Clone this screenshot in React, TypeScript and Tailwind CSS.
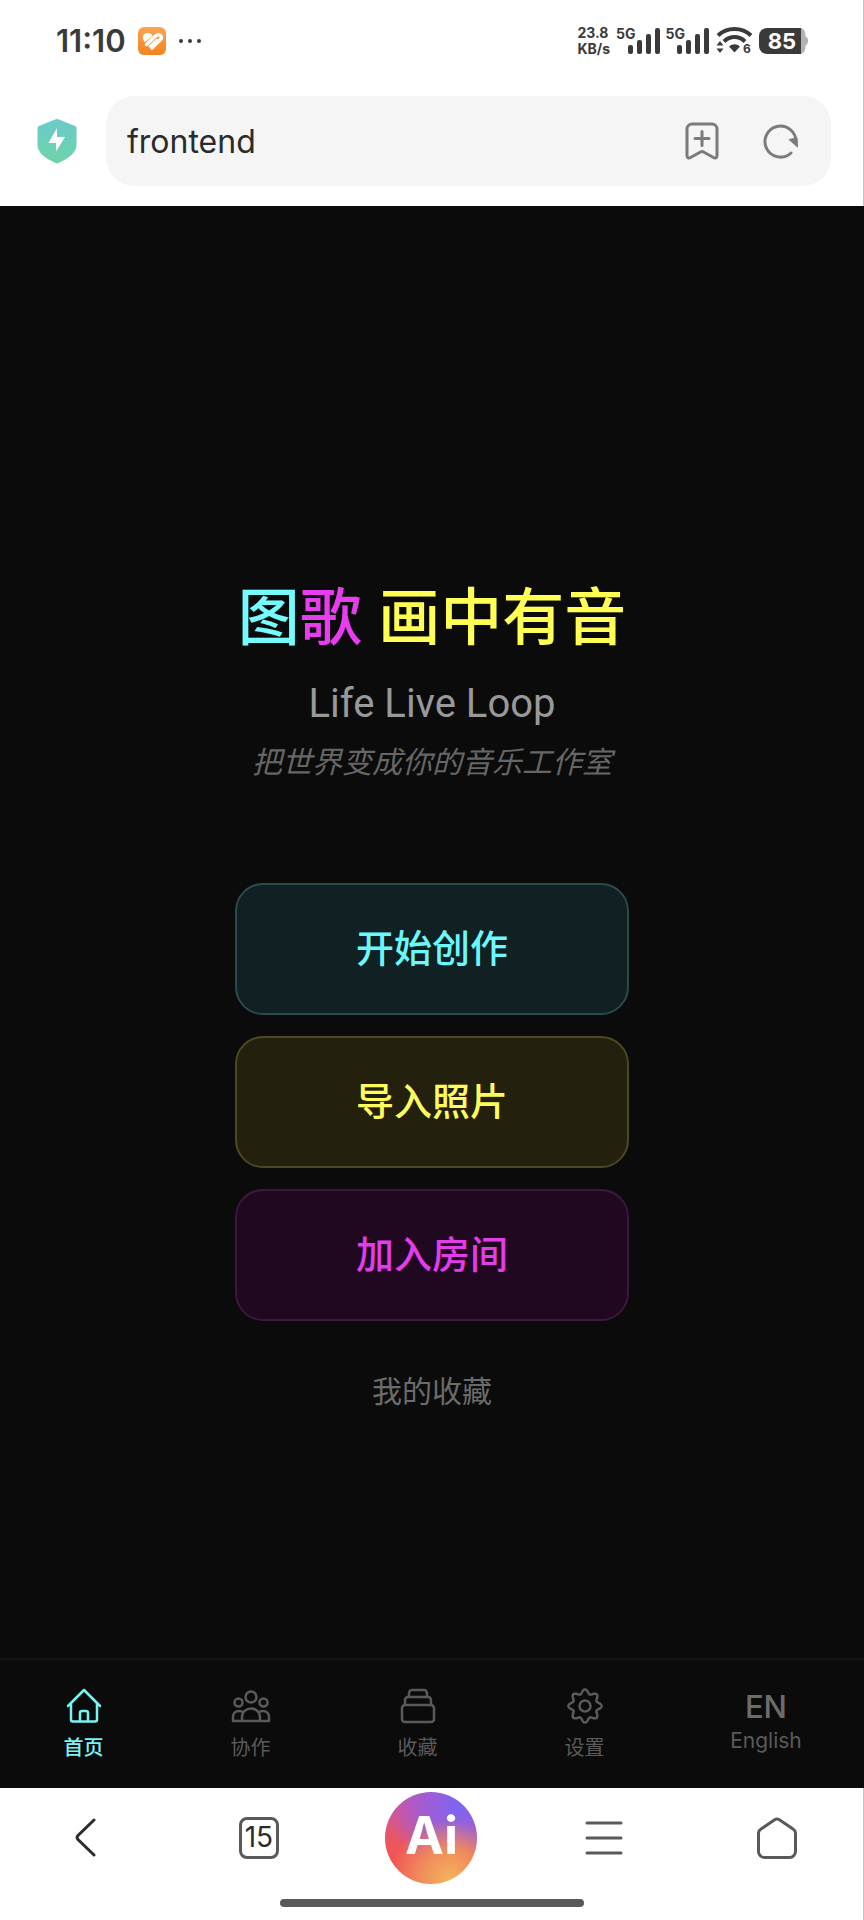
import type { ReactNode } from "react";

interface TabItem {
  id: string;
  label: string;
  icon: ReactNode;
  active?: boolean;
}

interface Action {
  label: string;
  className: string;
}

const actions: Action[] = [
  { label: "开始创作", className: "border-[#2b4a4b] bg-[#102023] text-[#6bf8fb]" },
  { label: "导入照片", className: "border-[#4b4924] bg-[#23200e] text-[#fdfc5c]" },
  { label: "加入房间", className: "border-[#3b183d] bg-[#200920] text-[#e23ceb]" },
];

// eight rounded teeth around the centre of a 36px box
function gearPath() {
  const points: string[] = [];
  for (let deg = 0; deg < 360; deg += 3) {
    const t = (deg * Math.PI) / 180;
    const wave = Math.cos(8 * t);
    const r = 14.5 + 2.1 * wave;
    points.push(`${(18 + r * Math.sin(t)).toFixed(2)} ${(18 - r * Math.cos(t)).toFixed(2)}`);
  }
  return `M${points.join("L")}Z`;
}

function TabIcon({ children }: { children: ReactNode }) {
  return (
    <svg
      viewBox="0 0 36 36"
      className="size-9"
      fill="none"
      stroke="currentColor"
      strokeWidth="2.5"
      strokeLinecap="round"
      strokeLinejoin="round"
      aria-hidden="true"
    >
      {children}
    </svg>
  );
}

const tabs: TabItem[] = [
  {
    id: "home",
    label: "首页",
    active: true,
    icon: (
      <TabIcon>
        <path d="M2 18 18 2l16 16" />
        <path d="M5 16v15.500a2 2 0 0 0 2 2h22a2 2 0 0 0 2-2V16" />
        <path d="M14 33V25a2 2 0 0 1 2-2h4a2 2 0 0 1 2 2v8" />
      </TabIcon>
    ),
  },
  {
    id: "collab",
    label: "协作",
    icon: (
      <svg
        viewBox="0 0 40 36"
        className="h-9 w-10"
        fill="none"
        stroke="currentColor"
        strokeWidth="2.5"
        strokeLinejoin="round"
        aria-hidden="true"
      >
        <circle cx="20" cy="9" r="5.500" />
        <circle cx="7.500" cy="14.500" r="4" />
        <circle cx="32.500" cy="14.500" r="4" />
        <path d="M11 33v-4c0-5 4-8.500 9-8.500s9 3.500 9 8.500v4Z" />
        <path d="M11 33H2v-4c0-3.500 2.500-6 6-6 1.800 0 3.300.5 4.500 1.600M29 33h9v-4c0-3.500-2.500-6-6-6-1.800 0-3.300.5-4.500 1.600" />
      </svg>
    ),
  },
  {
    id: "favorites",
    label: "收藏",
    icon: (
      <TabIcon>
        <path d="M9 9V5a3 3 0 0 1 3-3h12a3 3 0 0 1 3 3v4" />
        <path d="M5 17v-5a3 3 0 0 1 3-3h20a3 3 0 0 1 3 3v5" />
        <rect x="2" y="17" width="32" height="17" rx="3" />
      </TabIcon>
    ),
  },
  {
    id: "settings",
    label: "设置",
    icon: (
      <TabIcon>
        <path d={gearPath()} />
        <circle cx="18" cy="18" r="5.500" />
      </TabIcon>
    ),
  },
];

function Signal() {
  return (
    <div className="flex h-8 items-start">
      <span className="-mr-2 shrink-0 text-[14px] leading-[17px] font-bold">5G</span>
      <svg viewBox="0 0 32 32" className="size-8" fill="currentColor" aria-hidden="true">
        <rect x="0" y="20" width="5" height="9" rx="2" />
        <rect x="9" y="15" width="5" height="14" rx="2" />
        <rect x="18" y="9" width="5" height="20" rx="2" />
        <rect x="27" y="3" width="5" height="26" rx="2" />
      </svg>
    </div>
  );
}

function StatusBar() {
  return (
    <div className="flex h-[82px] items-center justify-between pr-[54px] pl-14 text-[#3a3a3a]">
      <div className="flex items-center gap-3">
        <span className="text-[31px] leading-9 font-semibold">11:10</span>
        <svg viewBox="0 0 28 28" className="size-7" aria-hidden="true">
          <defs>
            <linearGradient id="health" x1="0" y1="0" x2="0" y2="1">
              <stop offset="0" stopColor="#f9a552" />
              <stop offset="1" stopColor="#f58220" />
            </linearGradient>
          </defs>
          <rect width="28" height="28" rx="6" fill="url(#health)" />
          <g fill="none" stroke="#fff" strokeLinecap="round" strokeLinejoin="round">
            <path d="M6 11c0-4 4.500-5 7-2.500L7 13.500Z" fill="#fff" strokeWidth="2.500" />
            <path d="m8.500 17.500 9-8.500c3.500-3 7.500 0 5 3.500L14 21" strokeWidth="3.500" />
            <path d="m11.500 19.500 7.500-7" strokeWidth="2" />
          </g>
        </svg>
        <svg viewBox="0 0 24 6" className="h-[6px] w-6" fill="currentColor" aria-hidden="true">
          <circle cx="3" cy="3" r="2" />
          <circle cx="12" cy="3" r="2" />
          <circle cx="21" cy="3" r="2" />
        </svg>
      </div>
      <div className="flex items-center gap-[6px]">
        <div className="flex flex-col text-[14px] leading-4 font-bold">
          <span>23.8</span>
          <span>KB/s</span>
        </div>
        <Signal />
        <Signal />
        <svg viewBox="0 -2 38 34" className="h-[34px] w-[38px]" aria-hidden="true">
          <g fill="none" stroke="currentColor" strokeWidth="4">
            <path d="M3 9.500C12 .8 27 .8 36 9.500" />
            <path d="M9 15.500c6-6 15-6 21 0" />
          </g>
          <path d="M14 20.500c3.500-3 7.500-3 11 0l-5.500 6Z" fill="currentColor" />
          <path d="m5 15 3.500 4.500h-7ZM5 27l3.500-4.500h-7Z" fill="currentColor" />
          <text x="28" y="27" fontSize="12" fontWeight="700" fill="currentColor">
            6
          </text>
        </svg>
        <div className="flex items-center">
          <span className="flex h-[26px] w-[42px] items-center justify-center rounded-l-lg bg-[#3a3a3a] pl-1 text-[22px] leading-6 font-bold text-white">
            85
          </span>
          <svg viewBox="0 0 8 26" className="h-[26px] w-2" aria-hidden="true">
            <path d="M0 0c3 1 4.500 3 4.500 8.500C8 10 8 16 4.500 17.500 4.500 23 3 25 0 26Z" fill="#b3b3b3" />
          </svg>
        </div>
      </div>
    </div>
  );
}

function AddressBar() {
  return (
    <div className="flex h-[124px] items-start gap-7 pt-[14px] pr-8 pl-9">
      <svg viewBox="0 0 42 46" className="mt-[22px] h-[46px] w-[42px] shrink-0" aria-label="安全">
        <defs>
          <linearGradient id="shield" x1="0" y1="0" x2="0" y2="1">
            <stop offset="0" stopColor="#69cbcb" />
            <stop offset="1" stopColor="#6fd3a6" />
          </linearGradient>
        </defs>
        <path
          d="M19 1.500a5 5 0 0 1 4 0l16 6.500a2 2 0 0 1 1.500 2v16.500c0 8-7 13.500-18 18.500a4 4 0 0 1-3 0c-11-5-18-10.500-18-18.500V10A2 2 0 0 1 3 8Z"
          fill="url(#shield)"
        />
        <path d="m21 10-8.500 15H20v8.500L29 19h-8Z" fill="#fff" />
      </svg>
      <div className="flex h-[90px] min-w-0 flex-1 items-center rounded-[28px] bg-[#f5f5f5] pr-8 pl-[21px] text-[#7b7b7b]">
        <input
          aria-label="网址"
          defaultValue="frontend"
          className="min-w-0 flex-1 bg-transparent pt-[2px] text-[32px] leading-10 text-[#2b2b2b] outline-none"
        />
        <button type="button" aria-label="添加书签" className="mr-11">
          <svg
            viewBox="0 0 34 38"
            className="h-[38px] w-[34px]"
            fill="none"
            stroke="currentColor"
            strokeWidth="3"
            strokeLinecap="round"
            strokeLinejoin="round"
          >
            <path d="M7 2h20a5 5 0 0 1 5 5v26.500c0 2-1.500 3-3.500 2L18.500 30a3 3 0 0 0-3 0l-10 5.500c-2 1-3.500 0-3.500-2V7a5 5 0 0 1 5-5Z" />
            <path d="M17 9.500v14M10 16.500h14" />
          </svg>
        </button>
        <button type="button" aria-label="刷新">
          <svg viewBox="0 0 36 38" className="h-[38px] w-9" fill="none" stroke="currentColor" strokeWidth="3">
            <path d="M28 31A15.500 15.500 0 1 1 33 20" strokeLinecap="round" />
            <path d="m26 17.500 8-1.500.500 9Z" fill="currentColor" strokeWidth="1" />
          </svg>
        </button>
      </div>
    </div>
  );
}

function TabBar() {
  return (
    <nav className="grid h-[130px] grid-cols-[167fr_167fr_167fr_167fr_196fr] border-t-2 border-[#131313] pt-7">
      {tabs.map((tab) => (
        <a
          key={tab.id}
          href={`#${tab.id}`}
          className={`flex flex-col items-center gap-[10px] ${tab.active ? "font-medium text-[#7af3f3]" : "text-[#5a5a5a]"}`}
        >
          {tab.icon}
          <span className="text-[20px] leading-7">{tab.label}</span>
        </a>
      ))}
      <button type="button" className="flex flex-col items-center text-[#5a5a5a]">
        <span className="pt-[3px] text-[31px] leading-8 font-medium text-[#6c6c6c]">EN</span>
        <span className="text-[21px] leading-9">English</span>
      </button>
    </nav>
  );
}

function BrowserBar() {
  return (
    <footer className="flex h-[132px] flex-col items-center border-r border-[#c4c4c4] bg-white pt-1 text-[#595959]">
      <div className="grid w-full grid-cols-5 place-items-center">
        <button type="button" aria-label="后退">
          <svg
            viewBox="0 0 22 40"
            className="h-10 w-[22px]"
            fill="none"
            stroke="#2c2c2c"
            strokeWidth="3"
            strokeLinecap="round"
          >
            <path d="M19 2 3 17.500a3 3 0 0 0 0 4L19 37" />
          </svg>
        </button>
        <button
          type="button"
          aria-label="标签页"
          className="flex h-[42px] w-10 items-center justify-center rounded-lg border-[3px] border-[#595959] pb-[2px] text-[28px] leading-8 text-[#2c2c2c]"
        >
          15
        </button>
        <button
          type="button"
          className="size-[92px] rounded-full bg-[radial-gradient(circle_at_70%_95%,#f4b45c_0%,#f08a5c_28%,transparent_55%),radial-gradient(circle_at_80%_15%,#7b66f2_0%,#a55bd0_35%,transparent_65%),linear-gradient(#c457b4,#ef5656_60%)] pb-1 text-[52px] leading-none font-bold text-white"
        >
          Ai
        </button>
        <button type="button" aria-label="菜单">
          <svg
            viewBox="0 0 38 36"
            className="h-9 w-[38px]"
            fill="none"
            stroke="currentColor"
            strokeWidth="3"
            strokeLinecap="round"
          >
            <path d="M2 3h34M2 18h34M2 33h34" />
          </svg>
        </button>
        <button type="button" aria-label="主页">
          <svg
            viewBox="0 0 40 42"
            className="h-[42px] w-10"
            fill="none"
            stroke="currentColor"
            strokeWidth="3"
            strokeLinejoin="round"
          >
            <path d="M18 2.500a4 4 0 0 1 4 0l14 9.500a5 5 0 0 1 2.500 4v18.500a6 6 0 0 1-6 6h-25a6 6 0 0 1-6-6V16A5 5 0 0 1 4 12Z" />
          </svg>
        </button>
      </div>
      <div className="mt-[15px] h-2 w-[304px] rounded-full bg-[#595959]" />
    </footer>
  );
}

export default function App() {
  return (
    <div className="flex min-h-screen flex-col bg-[#0b0b0b] font-['Inter','Noto_Sans_CJK_SC',sans-serif]">
      <header className="border-r border-[#c4c4c4] bg-white">
        <StatusBar />
        <AddressBar />
      </header>

      <main className="flex flex-1 flex-col items-center justify-center pt-[126px]">
        <h1 className="text-[62px] leading-[76px] font-medium text-[#ffff54]">
          <span className="text-[#74fbfd]">图</span>
          <span className="text-[#e83cf0]">歌</span> 画中有音
        </h1>
        <p className="mt-6 font-['Roboto',sans-serif] text-[40px] leading-12 text-[#999999]">Life Live Loop</p>
        <p className="mt-[14px] text-[30px] leading-10 text-[#666666] italic">把世界变成你的音乐工作室</p>

        <div className="mt-[101px] flex w-[394px] max-w-full flex-col gap-[21px]">
          {actions.map((action) => (
            <button
              key={action.label}
              type="button"
              className={`h-[132px] rounded-[28px] border-2 pb-[2px] text-[38px] leading-12 font-medium ${action.className}`}
            >
              {action.label}
            </button>
          ))}
        </div>

        <a href="#favorites" className="mt-[50px] text-[30px] leading-10 text-[#6b6b6b]">
          我的收藏
        </a>
      </main>

      <TabBar />
      <BrowserBar />
    </div>
  );
}
